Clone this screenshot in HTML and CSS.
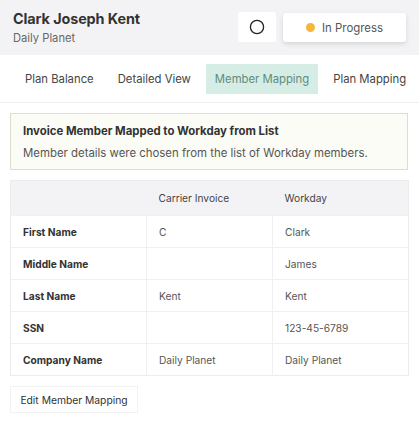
FILE: index.html
```html
<!DOCTYPE html>
<html>
<head>
<meta charset="utf-8">
<link rel="stylesheet" href="styles.css">
</head>
<body>
<header class="top">
  <div class="who">
    <div class="name">Clark Joseph Kent</div>
    <div class="org">Daily Planet</div>
  </div>
  <div class="actions">
    <button class="icon-btn"><svg width="16" height="16" viewBox="0 0 16 16"><circle cx="8" cy="8" r="6.6" fill="none" stroke="#222" stroke-width="1.3"/></svg></button>
    <button class="status-btn"><span class="dot"></span>In Progress</button>
  </div>
</header>
<nav class="tabs">
  <span class="tab">Plan Balance</span>
  <span class="tab">Detailed View</span>
  <span class="tab active">Member Mapping</span>
  <span class="tab">Plan Mapping</span>
</nav>
<main class="content">
  <div class="alert">
    <div class="alert-title">Invoice Member Mapped to Workday from List</div>
    <div class="alert-text">Member details were chosen from the list of Workday members.</div>
  </div>
  <table class="map">
    <thead>
      <tr><th class="c1"></th><th class="c2">Carrier Invoice</th><th class="c3">Workday</th></tr>
    </thead>
    <tbody>
      <tr><td class="lbl">First Name</td><td>C</td><td>Clark</td></tr>
      <tr><td class="lbl">Middle Name</td><td></td><td>James</td></tr>
      <tr><td class="lbl">Last Name</td><td>Kent</td><td>Kent</td></tr>
      <tr><td class="lbl">SSN</td><td></td><td>123-45-6789</td></tr>
      <tr><td class="lbl">Company Name</td><td>Daily Planet</td><td>Daily Planet</td></tr>
    </tbody>
  </table>
  <button class="edit-btn">Edit Member Mapping</button>
</main>
</body>
</html>
```
FILE: styles.css
```css
* { box-sizing: border-box; }
body {
  margin: 0;
  font-family: Inter, "Noto Sans", sans-serif;
  color: #333;
  background: #fff;
}
.top {
  height: 55px;
  background: #f3f3f6;
  display: flex;
  justify-content: space-between;
  align-items: flex-start;
  padding: 10px 13px 0 13px;
}
.name {
  font-size: 14.4px;
  font-weight: 700;
  color: #333;
  letter-spacing: -0.1px;
  line-height: 18px;
}
.org {
  font-size: 11.2px;
  color: #666;
  line-height: 18px;
  margin-top: 1px;
}
.actions {
  display: flex;
  gap: 7px;
  padding-top: 2px;
}
.icon-btn {
  width: 38px;
  height: 30px;
  border: none;
  background: #fff;
  border-radius: 3px;
  display: flex;
  align-items: center;
  justify-content: center;
  padding: 0;
}
.status-btn {
  width: 123px;
  height: 29px;
  margin-top: 1px;
  border: none;
  background: #fff;
  border-radius: 3px;
  box-shadow: 0 2px 5px rgba(0,0,0,0.12);
  display: flex;
  align-items: center;
  justify-content: center;
  gap: 7px;
  font-family: inherit;
  font-size: 11.4px;
  color: #555;
  padding: 0;
}
.dot {
  width: 9px;
  height: 9px;
  border-radius: 50%;
  background: #f3b73c;
}
.tabs {
  display: flex;
  gap: 6px;
  padding: 9px 0 0 16px;
  height: 48px;
  border-bottom: 1px solid #efeff2;
  white-space: nowrap;
  overflow: hidden;
}
.tab {
  height: 30px;
  padding: 0 9px;
  display: flex;
  align-items: center;
  font-size: 11.3px;
  color: #444;
}
.tab.active {
  background: #d6ede5;
  color: #5f8c7e;
}
.content {
  padding: 10px 10px 0 10px;
}
.alert {
  width: 398px;
  height: 57px;
  background: #fbfcf5;
  border: 1px solid #d8e1cc;
  padding: 10px 12px;
}
.alert-title {
  font-size: 11.4px;
  font-weight: 700;
  color: #333;
  line-height: 15px;
}
.alert-text {
  font-size: 11.4px;
  color: #555;
  line-height: 16px;
  margin-top: 6px;
}
.map {
  margin-top: 10px;
  width: 399px;
  border-collapse: collapse;
  border: 1px solid #ececef;
  font-size: 10.2px;
  color: #444;
}
.map th {
  height: 35px;
  background: #f3f3f6;
  text-align: left;
  font-weight: 400;
  padding: 0 12px;
}
.map td {
  height: 32px;
  padding: 0 12px;
  border-top: 1px solid #f0f0f2;
  color: #555;
}
.map td + td { border-left: 1px solid #f0f0f2; }
.c1 { width: 136px; }
.c2 { width: 126px; }
.map td.lbl {
  font-weight: 700;
  color: #333;
}
.edit-btn {
  margin-top: 10px;
  height: 27px;
  width: 128px;
  background: #fff;
  border: 1px solid #f2f2f4;
  font-family: inherit;
  font-size: 10.3px;
  color: #333;
  padding: 0;
}
```
